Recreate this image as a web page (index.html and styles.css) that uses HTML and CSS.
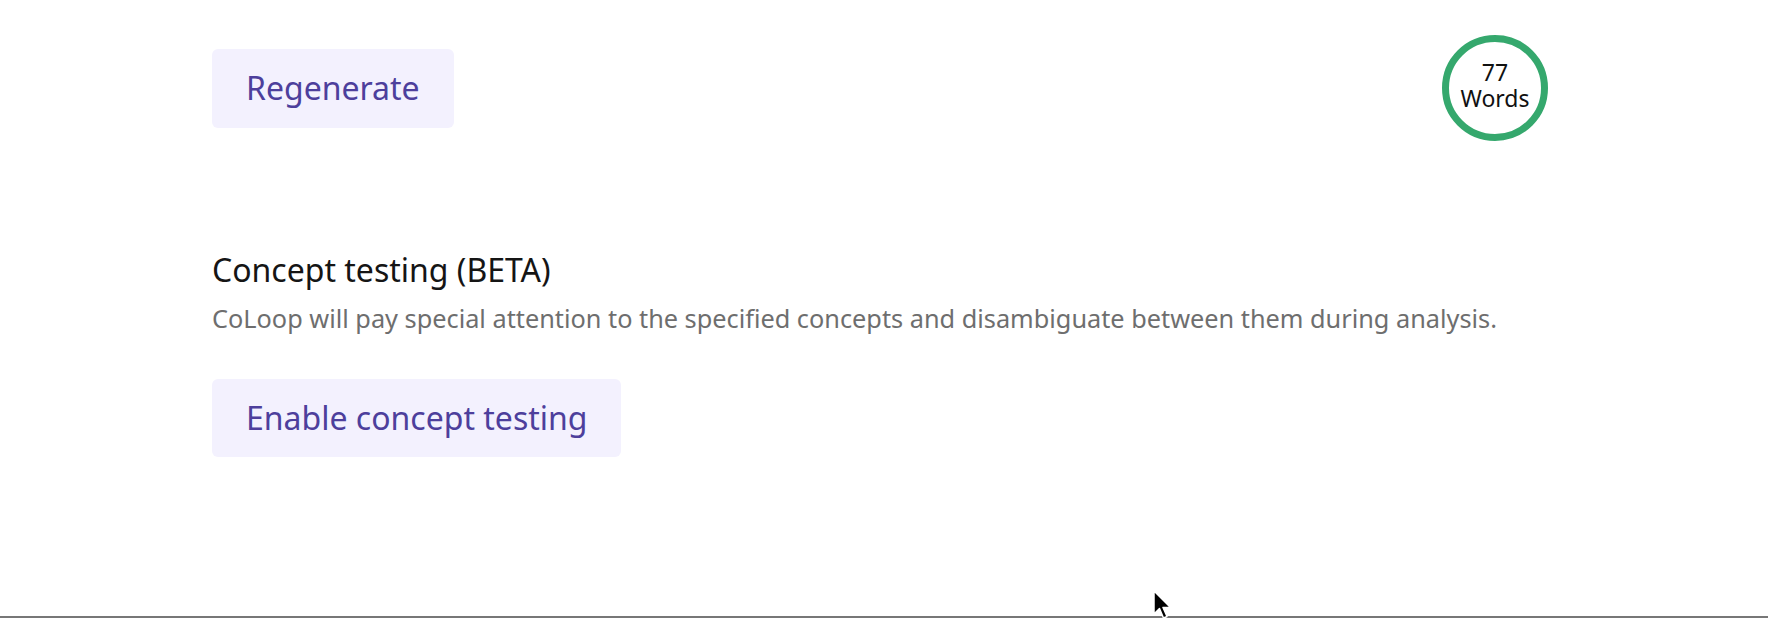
FILE: index.html
```html
<!DOCTYPE html>
<html>
<head>
<meta charset="utf-8">
<link rel="stylesheet" href="styles.css">
</head>
<body>
<div class="page">
  <div class="top-row">
    <button class="btn">Regenerate</button>
    <div class="count"><span>77</span><span>Words</span></div>
  </div>
  <section class="concept">
    <h2 class="title">Concept testing (BETA)</h2>
    <p class="desc">CoLoop will pay special attention to the specified concepts and disambiguate between them during analysis.</p>
    <button class="btn">Enable concept testing</button>
  </section>
  <div class="cursor">
    <svg width="22" height="30" viewBox="0 0 22 30"><path d="M1 1 L1 24 L6.5 18.5 L10.5 28 L14 26.5 L10 17.5 L17.5 17.5 Z" fill="#000" stroke="#fff" stroke-width="1.5" stroke-linejoin="round"/></svg>
  </div>
</div>
</body>
</html>
```

FILE: styles.css
```css
html, body {
  margin: 0;
  padding: 0;
  background: #fff;
}
body {
  font-family: "Noto Sans", "Open Sans", sans-serif;
  width: 1768px;
  height: 620px;
  overflow: hidden;
}
.page {
  position: relative;
  height: 618px;
  border-bottom: 2px solid #777;
  padding-left: 212px;
  padding-right: 220px;
  box-sizing: border-box;
}
.top-row {
  display: flex;
  justify-content: space-between;
  align-items: center;
  padding-top: 35px;
}
.btn {
  font-family: "Noto Sans", "Open Sans", sans-serif;
  font-size: 32px;
  color: #4d3f9c;
  background: #f3f1fe;
  border: none;
  border-radius: 6px;
  height: 79px;
  padding: 0 34px;
  line-height: 1;
}
.count {
  width: 106px;
  height: 106px;
  box-sizing: border-box;
  border: 7px solid #35a86d;
  border-radius: 50%;
  padding-bottom: 6px;
  display: flex;
  flex-direction: column;
  align-items: center;
  justify-content: center;
  font-size: 23px;
  line-height: 26px;
  color: #111;
}
.concept {
  padding-top: 109px;
}
.title {
  margin: 0;
  font-size: 32px;
  font-weight: 400;
  color: #151515;
  line-height: 40px;
}
.desc {
  margin: 13px 0 46px;
  font-size: 25.3px;
  color: #6e6e6e;
  line-height: 30px;
}
.concept .btn {
  height: 78px;
}
.cursor {
  position: absolute;
  left: 1153px;
  top: 590px;
}
```
